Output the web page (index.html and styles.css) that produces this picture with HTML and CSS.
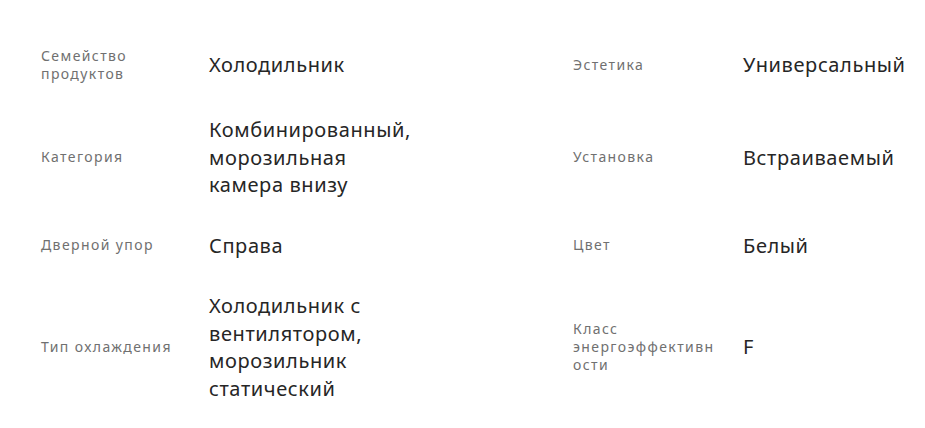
FILE: index.html
```html
<!DOCTYPE html>
<html lang="ru">
<head>
<meta charset="utf-8">
<link rel="stylesheet" href="styles.css">
</head>
<body>
<dl class="specs">
  <dt class="label">Семейство продуктов</dt>
  <dd class="value">Холодильник</dd>
  <dt class="label">Эстетика</dt>
  <dd class="value">Универсальный</dd>

  <dt class="label">Категория</dt>
  <dd class="value">Комбинированный, морозильная камера внизу</dd>
  <dt class="label">Установка</dt>
  <dd class="value">Встраиваемый</dd>

  <dt class="label">Дверной упор</dt>
  <dd class="value">Справа</dd>
  <dt class="label">Цвет</dt>
  <dd class="value">Белый</dd>

  <dt class="label">Тип охлаждения</dt>
  <dd class="value">Холодильник с вентилятором, морозильник статический</dd>
  <dt class="label">Класс энергоэффективности</dt>
  <dd class="value">F</dd>
</dl>
</body>
</html>
```
FILE: styles.css
```css
html, body {
  margin: 0;
  padding: 0;
  background: #ffffff;
}

body {
  font-family: "Noto Sans", "Open Sans", sans-serif;
}

.specs {
  margin: 0;
  padding: 47px 20px 0 41px;
  display: grid;
  grid-template-columns: 168px 364px 170px 1fr;
  row-gap: 33px;
  align-items: center;
}

.label {
  margin: 0;
  font-size: 14px;
  line-height: 18px;
  letter-spacing: 1.4px;
  color: #707070;
  padding-right: 24px;
  overflow-wrap: anywhere;
}

.value {
  margin: 0;
  font-size: 20px;
  line-height: 27.5px;
  letter-spacing: 0.6px;
  color: #262626;
  max-width: 204px;
}
```
